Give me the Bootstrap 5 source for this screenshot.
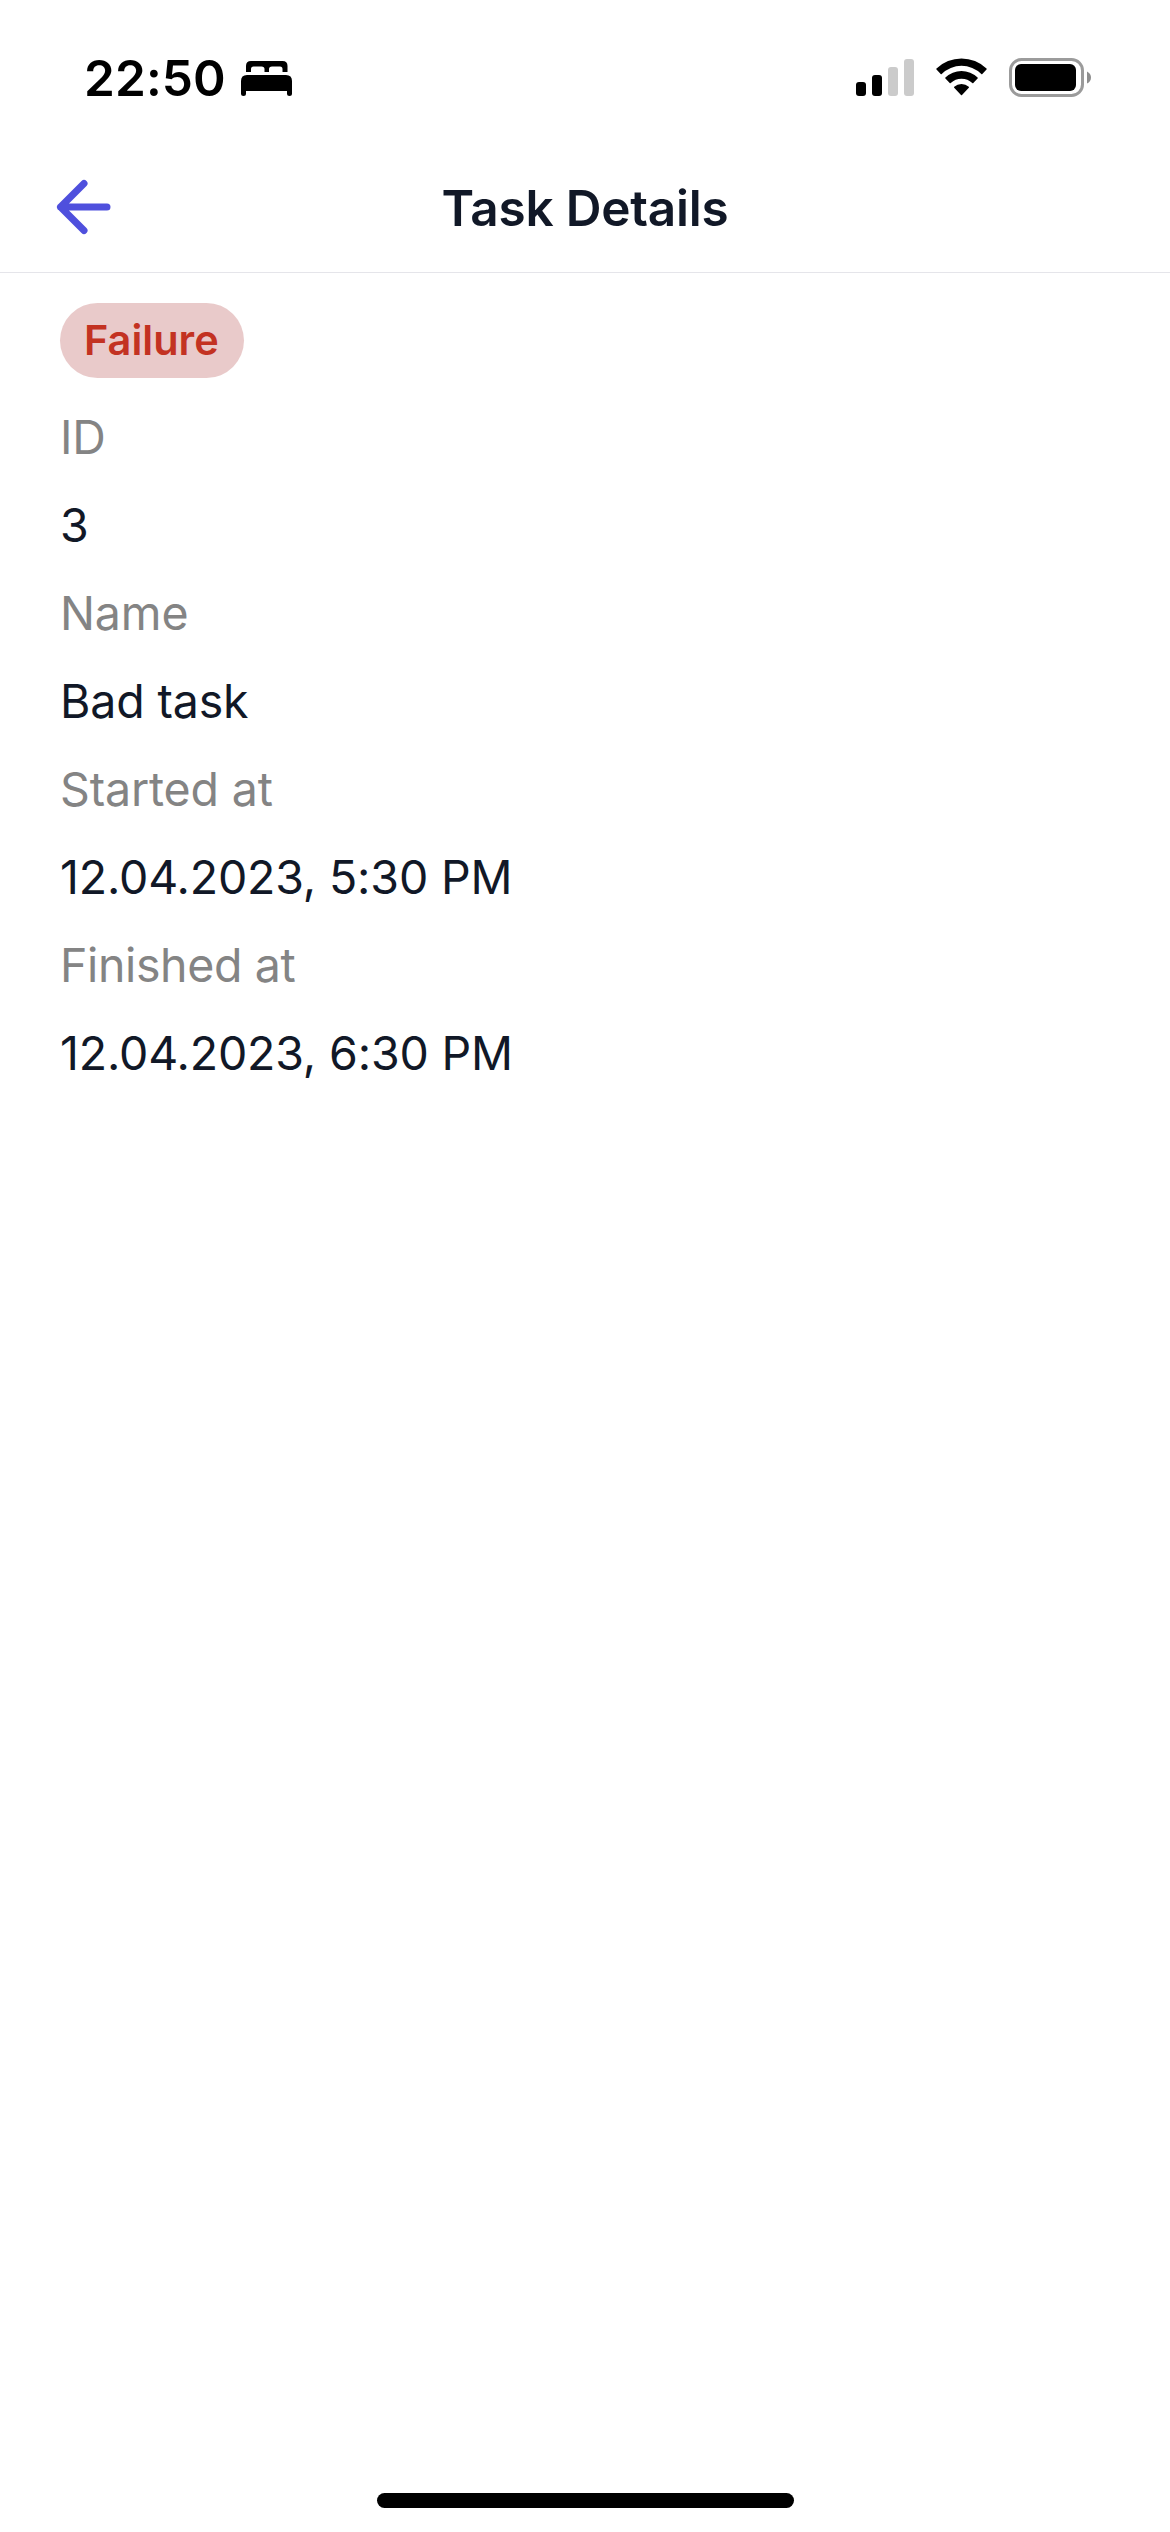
<!DOCTYPE html>
<html lang="en">
<head>
<meta charset="utf-8">
<meta name="viewport" content="width=device-width, initial-scale=1">
<title>Task Details</title>
<link rel="stylesheet" href="https://cdn.jsdelivr.net/npm/bootstrap@5.3.0/dist/css/bootstrap.min.css">
<style>
  body { font-family: Inter, "Liberation Sans", sans-serif; color: #111827; background: #fff; }
  .screen { height: 2532px; overflow: hidden; }
  .status-bar { height: 144px; padding: 12px 78px 0 84px; color: #000; }
  .status-time { font-size: 49.5px; font-weight: 600; line-height: 60px; letter-spacing: .1px; width: 157px; }
  .signal-icon { margin-right: 22px; }
  .wifi-icon { margin-right: 22px; }
  .top-bar { height: 129px; border-bottom: 1px solid #e5e5ea; }
  .back-link { width: 72px; margin-left: 48px; margin-right: -120px; color: #4f50dd; }
  .top-title { font-size: 49.5px; font-weight: 600; line-height: 60px; letter-spacing: -.22px; }
  .details { padding: 30px 60px 0; }
  .status-pill { height: 75px; padding: 0 24px; width: 184px; background: #e9caca; color: #c33222; font-size: 41.5px; font-weight: 600; line-height: 75px; margin-bottom: 27px; }
  .fields { gap: 24px; font-size: 46.5px; line-height: 64px; letter-spacing: -.16px; }
  .fields dt { font-weight: 400; color: #848484; }
  .fields .tight { letter-spacing: -.38px; }
  .home-bar { width: 417px; height: 15px; margin-bottom: 24px; background: #000; }
</style>
</head>
<body>
<div class="screen d-flex flex-column">
  <div class="status-bar d-flex align-items-center flex-shrink-0">
    <span class="status-time">22:50</span>
    <svg width="51" height="36" viewBox="0 0 51 36" fill="currentColor" aria-label="Sleep focus">
      <path d="M5 12V6Q5 1 10 1H41.500Q46.500 1 46.500 6V12H41.500V9Q41.500 6.500 39 6.500H31Q28 6.500 28 9V12H23.500V9Q23.500 6.500 20.500 6.500H12.500Q10 6.500 10 9V12Z"/>
      <path d="M0 21Q0 15 6 15H45Q51 15 51 21V33.500Q51 36 48.500 36Q46 36 46 33.500V31H5V33.500Q5 36 2.500 36Q0 36 0 33.500Z"/>
    </svg>
    <div class="d-flex align-items-center ms-auto">
      <svg class="signal-icon" width="58" height="40" viewBox="0 0 58 40" fill="#000">
        <rect x="0" y="24" width="10" height="14" rx="3"/>
        <rect x="16" y="17" width="10" height="21" rx="3"/>
        <rect x="32" y="9" width="10" height="29" rx="3" fill="#cbcbcb"/>
        <rect x="48" y="1" width="10" height="37" rx="3" fill="#cbcbcb"/>
      </svg>
      <svg class="wifi-icon" width="51" height="40" viewBox="0 0 51 40" fill="#000">
        <path d="M.5 11.500Q0 11 .5 10.500A36 36 0 0 1 50.500 10.500Q51 11 50.500 11.500L46.300 15.900Q45.800 16.400 45.300 15.900A28.400 28.400 0 0 0 5.700 15.900Q5.200 16.400 4.700 15.900Z"/>
        <path d="M9.400 20.600Q8.900 20.100 9.400 19.600A23.200 23.200 0 0 1 41.600 19.600Q42.100 20.100 41.600 20.600L37.300 25Q36.800 25.500 36.300 25A15.800 15.800 0 0 0 14.700 25Q14.200 25.500 13.700 25Z"/>
        <path d="M18.200 29.700Q17.700 29.200 18.200 28.700A11 11 0 0 1 32.800 28.700Q33.300 29.200 32.800 29.700L26 36.900Q25.500 37.400 25 36.900Z"/>
      </svg>
      <svg width="83" height="40" viewBox="0 0 83 40">
        <rect x="1.500" y="1.500" width="72" height="36" rx="11" fill="none" stroke="#9b9b9b" stroke-width="3"/>
        <rect x="6" y="6" width="61" height="27" rx="6" fill="#000"/>
        <path d="M78 13.500Q82 15.500 82 19.500T78 25.500Z" fill="#8e8e8e"/>
      </svg>
    </div>
  </div>

  <header class="top-bar d-flex align-items-center flex-shrink-0">
    <a class="back-link d-flex" href="#" aria-label="Back">
      <svg width="72" height="72" viewBox="0 0 72 72" fill="none" stroke="currentColor" stroke-width="7" stroke-linecap="round" stroke-linejoin="round">
        <path d="M36 11.500L12.500 35L36 58.500M12.500 35H59"/>
      </svg>
    </a>
    <h1 class="top-title flex-fill text-center m-0">Task Details</h1>
  </header>

  <main class="details d-flex flex-column align-items-start">
    <span class="status-pill rounded-pill">Failure</span>
    <dl class="fields d-flex flex-column m-0">
      <dt>ID</dt>
      <dd class="m-0">3</dd>
      <dt>Name</dt>
      <dd class="m-0">Bad task</dd>
      <dt>Started at</dt>
      <dd class="m-0">12.04.2023, 5:30 PM</dd>
      <dt class="tight">Finished at</dt>
      <dd class="m-0">12.04.2023, 6:30 PM</dd>
    </dl>
  </main>

  <div class="home-bar rounded-pill mt-auto mx-auto"></div>
</div>
<script src="https://cdn.jsdelivr.net/npm/bootstrap@5.3.0/dist/js/bootstrap.bundle.min.js"></script>
</body>
</html>
